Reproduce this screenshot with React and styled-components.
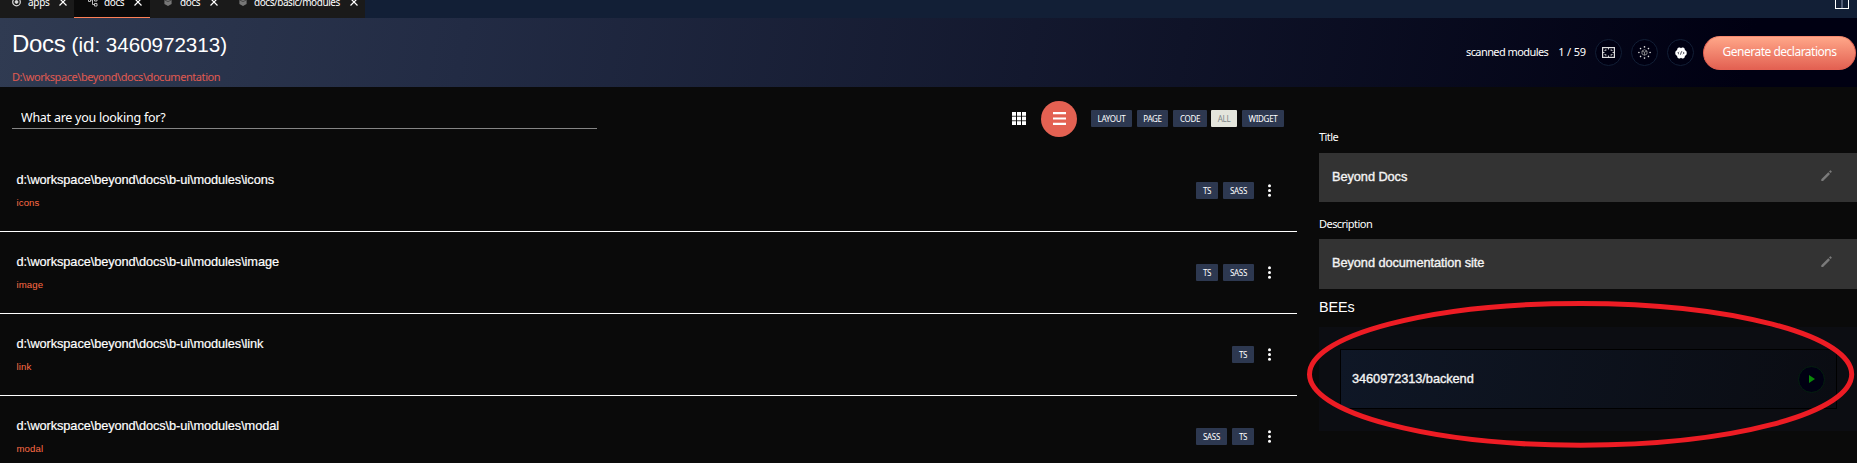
import React from "react";
import styled, { createGlobalStyle } from "styled-components";

const ui = `"Noto Sans", "Open Sans", sans-serif`;
const arial = `"Liberation Sans", Arial, sans-serif`;

const GlobalStyle = createGlobalStyle`
  * { box-sizing: border-box; }
  html, body { margin: 0; height: 100%; overflow: hidden; }
  body { background: #0a0a0a; color: #fff; font-family: ${ui}; }
  button { border: 0; padding: 0; background: none; color: inherit; font: inherit; }
`;

const Page = styled.div`
  position: relative;
  height: 463px;
  overflow: hidden;
  display: flex;
  flex-direction: column;
`;

const TabBar = styled.nav`
  display: flex;
  justify-content: space-between;
  align-items: flex-end;
  height: 18px;
  flex: none;
  overflow: hidden;
  background: #121f36;
`;
const Tabs = styled.div`
  display: flex;
  align-items: flex-end;
`;
const Tab = styled.div`
  display: flex;
  align-items: center;
  width: ${(p) => p.$width}px;
  height: 32px;
  padding: 0 0 0 ${(p) => p.$inset}px;
  background: ${(p) => (p.$active ? "#0a0a0a" : "#1a1a1a")};
  border-bottom: 1px solid ${(p) => (p.$active ? "#ff8056" : "#1a1a1a")};
  svg { flex: none; }
`;
const TabLabel = styled.span`
  width: ${(p) => p.$width}px;
  margin: 0 10px 0 ${(p) => p.$gap}px;
  font-size: 10px;
  line-height: 14px;
  letter-spacing: ${(p) => p.$track}px;
  white-space: nowrap;
`;
const SplitButton = styled.button`
  width: 14px;
  height: 14px;
  margin: 0 8px 9px 0;
  line-height: 0;
`;

const Header = styled.header`
  display: flex;
  justify-content: space-between;
  height: 69px;
  flex: none;
  background: linear-gradient(100deg, #303b52 0%, #222b44 25%, #000012 94%);
`;
const HeaderInfo = styled.div`
  padding: 10px 0 0 12px;
`;
const ProjectTitle = styled.h1`
  margin: 0;
  font: 400 24px/32px ${arial};
  letter-spacing: -0.35px;
  white-space: nowrap;
  small {
    font-size: 20.6px;
    letter-spacing: -0.02px;
  }
`;
const ProjectPath = styled.div`
  margin-top: 8px;
  color: #e05a50;
  font-size: 11px;
  line-height: 16px;
  letter-spacing: -0.43px;
`;
const HeaderActions = styled.div`
  display: flex;
  align-items: center;
  height: 69px;
  padding-right: 1px;
`;
const ScanStatus = styled.div`
  display: flex;
  gap: 10px;
  margin: 0 9px 1px 0;
  font-size: 11px;
  line-height: 16px;
  letter-spacing: -0.58px;
  white-space: nowrap;
  span + span { letter-spacing: -0.15px; }
`;
const RoundButton = styled.button`
  display: flex;
  align-items: center;
  justify-content: center;
  width: 27px;
  height: 27px;
  margin-right: 9px;
  border: 1px solid ${(p) => p.$ring || "#121f36"};
  border-radius: 50%;
  background: #000012;
`;
const PrimaryButton = styled.button`
  width: 153px;
  height: 34px;
  padding-bottom: 1px;
  border: 1px solid #e36152;
  border-top-color: #f5886f;
  border-radius: 17px;
  background: linear-gradient(#ffa789, #e36152);
  color: #fff;
  font-size: 12px;
  line-height: 16px;
  letter-spacing: -0.5px;
  white-space: nowrap;
`;

const Body = styled.div`
  display: flex;
  flex: 1;
  min-height: 0;
`;
const Main = styled.main`
  width: 1297px;
  flex: none;
`;
const Toolbar = styled.div`
  display: flex;
  align-items: center;
  height: 63px;
  padding: 0 13px 0 12px;
`;
const SearchInput = styled.input`
  width: 585px;
  height: 22px;
  margin: 0 auto 2px 0;
  padding: 0 9px;
  border: 0;
  border-bottom: 1px solid #858585;
  background: transparent;
  font: 12.5px/20px ${ui};
  letter-spacing: -0.25px;
  outline: none;
  &::placeholder { color: #fff; opacity: 1; }
`;
const ViewSwitch = styled.div`
  display: flex;
  align-items: center;
  gap: 15px;
  margin-right: 14px;
`;
const ViewButton = styled.button`
  display: flex;
  align-items: center;
  justify-content: center;
  width: ${(p) => (p.$active ? 36 : 14)}px;
  height: 36px;
  border-radius: 50%;
  background: ${(p) => (p.$active ? "#e36152" : "transparent")};
`;
const Tag = styled.span`
  display: inline-flex;
  align-items: center;
  justify-content: center;
  width: ${(p) => p.$width}px;
  height: 17px;
  margin-left: ${(p) => (p.$active ? -1 : 0)}px;
  border-radius: 1px;
  background: ${(p) => (p.$active ? "#e4e5dc" : "#2d3850")};
  color: ${(p) => (p.$active ? "#7e8788" : "#fff")};
  font-size: 8px;
  line-height: 16px;
  letter-spacing: -0.3px;
`;
const Tags = styled.div`
  display: flex;
  gap: 5px;
`;

const Row = styled.article`
  display: flex;
  justify-content: space-between;
  height: 82px;
  padding: 0 24.700px 0 16.500px;
  border-bottom: 1px solid #fff;
`;
const RowText = styled.div`
  padding-top: 20px;
`;
const ModulePath = styled.div`
  font: 12.8px/20px ${arial};
  letter-spacing: -0.1px;
  -webkit-text-stroke: 0.2px currentColor;
`;
const ModuleName = styled.div`
  margin-top: 6px;
  color: #ff6b45;
  font: 9.6px/14px ${arial};
  letter-spacing: 0.1px;
`;
const RowActions = styled.div`
  display: flex;
  align-items: center;
  height: 17px;
  margin-top: 32px;
  gap: 13.300px;
`;
const MoreButton = styled.button`
  width: 5px;
  height: 13px;
  line-height: 0;
`;

const Aside = styled.aside`
  flex: 1;
  padding: 42px 0 0 22px;
`;
const FieldLabel = styled.label`
  display: block;
  font-size: 11px;
  line-height: 16px;
  letter-spacing: -0.55px;
`;
const Field = styled.div`
  display: flex;
  align-items: center;
  justify-content: space-between;
  height: ${(p) => p.$height}px;
  margin: ${(p) => p.$top}px 0 ${(p) => p.$bottom}px;
  padding: 0 25px 2px 13px;
  background: #333;
  color: #f4f4f4;
  font: 12.8px/20px ${arial};
  letter-spacing: -0.08px;
  -webkit-text-stroke: 0.35px currentColor;
  svg { margin-bottom: 3px; }
`;
const SectionTitle = styled.h2`
  margin: 8px 0 10px;
  font: 400 14.4px/20px ${arial};
  letter-spacing: -0.1px;
`;
const BeePanel = styled.section`
  height: 104px;
  padding: 22px 20px 22px 21px;
  background: #0c0d12;
`;
const BeeCard = styled.div`
  display: flex;
  align-items: center;
  justify-content: space-between;
  height: 60px;
  padding: 0 11px 0 11px;
  border: 1px solid #000;
  background: linear-gradient(100deg, #0f1726, #0a0c12);
  font: 12.8px/20px ${arial};
  letter-spacing: -0.08px;
  -webkit-text-stroke: 0.35px currentColor;
  color: #f4f4f4;
  ${RoundButton} { margin: 0; }
`;

const Highlight = styled.svg`
  position: absolute;
  left: 1305px;
  top: 299px;
  pointer-events: none;
`;

const CloseIcon = () => (
  <svg width="8" height="8" viewBox="0 0 8 8" stroke="#fff" strokeWidth="1.2">
    <path d="M.5.5l7 7M7.5.5l-7 7" />
  </svg>
);
const AppsIcon = () => (
  <svg width="9" height="10" viewBox="0 0 9 10" fill="none" stroke="#ddd">
    <circle cx="4.5" cy="5" r="3.8" strokeWidth="1.2" />
    <circle cx="4.5" cy="5" r="1.4" fill="#ddd" />
  </svg>
);
const TreeIcon = () => (
  <svg width="10" height="10" viewBox="0 0 10 10" fill="none" stroke="#bbb">
    <path d="M.5 1.500h2v3h-2zM6.500 1.500H9v2.500H6.500zM6.500 6.500H9v2.500H6.500zM2.500 3h2M4.500 2.500V7.500M4.500 2.500h2M4.500 7.500h2" />
  </svg>
);
const CubeIcon = () => (
  <svg width="8" height="10" viewBox="0 0 8 10">
    <path d="M4 1l3.600 1.800v4.200L4 9 .4 7V2.800z" fill="#777" />
    <path d="M.6 3L4 4.600 7.400 3" fill="none" stroke="#333" strokeWidth=".7" />
  </svg>
);
const SplitIcon = () => (
  <svg width="14" height="14" viewBox="0 0 14 14" fill="none">
    <path d="M7 1v12" stroke="#66718a" strokeWidth="1.500" />
    <rect x=".5" y=".5" width="13" height="13" stroke="#fff" />
  </svg>
);
const FrameIcon = () => (
  <svg width="13" height="11" viewBox="0 0 13 11" fill="none" stroke="#ddd">
    <rect x=".6" y=".6" width="11.800" height="9.800" strokeWidth="1.200" />
    <path d="M3 4V3h1.500M8.500 3H10v1M3 7v1h1.500M8.500 8H10V7M6.500 1v1.500M6.500 8.500V10M1 5.500h1.500M10.500 5.500H12" strokeWidth=".9" />
  </svg>
);
const NodesIcon = () => (
  <svg width="13" height="13" viewBox="0 0 13 13" fill="none">
    <path d="M6.500 3.700L9 5v3L6.500 9.300 4 8V5zM4 5l2.500 1.200L9 5M6.500 6.200v3" stroke="#999" strokeWidth=".8" />
    <g fill="#ddd">
      {[0, 45, 90, 135, 180, 225, 270, 315].map((a) => (
        <circle key={a} cx="6.500" cy=".9" r=".8" transform={`rotate(${a} 6.500 6.500)`} />
      ))}
    </g>
  </svg>
);
const CodeBadgeIcon = () => (
  <svg width="12" height="12" viewBox="0 0 12 12">
    <path
      d="M3.700.5h1.300l1 .8 1-.8h1.300l1.300.9.3 1.600 1.500 1.200.4 1.800-.4 1.800-1.500 1.200-.3 1.500-1.300 1H7l-1-.8-1 .8H3.700l-1.300-1-.3-1.500L.6 7.800.2 6l.4-1.800L2.100 3l.3-1.600z"
      fill="#fff"
    />
    <path d="M4 4.800L2.800 6 4 7.200M8 4.800L9.200 6 8 7.200M6.600 4.300L5.400 7.700" fill="none" stroke="#223" strokeWidth=".8" />
  </svg>
);
const GridIcon = () => (
  <svg width="14" height="13" viewBox="0 0 14 13" fill="#fff">
    {[0, 5, 10].map((x) => [0, 4.6, 9.2].map((y) => <rect key={`${x}-${y}`} x={x} y={y} width="4" height="3.800" />))}
  </svg>
);
const ListIcon = () => (
  <svg width="13" height="13" viewBox="0 0 13 13" fill="#fff">
    <path d="M0 0h13v2.200H0zM0 5.400h13v2.200H0zM0 10.800h13V13H0z" />
  </svg>
);
const MoreIcon = () => (
  <svg width="5" height="13" viewBox="0 0 5 13" fill="#fff">
    <circle cx="2.500" cy="1.700" r="1.500" />
    <circle cx="2.500" cy="6.500" r="1.500" />
    <circle cx="2.500" cy="11.300" r="1.500" />
  </svg>
);
const PencilIcon = () => (
  <svg width="11" height="11" viewBox="0 0 11 11" fill="#7b7b7b">
    <path d="M.3 11V9.200l7-7 1.700 1.700L2 11zM8 1.500L9 .4q.4-.4.800 0l.8.8q.4.4 0 .8L9.600 3.100z" />
  </svg>
);
const PlayIcon = () => (
  <svg width="6" height="8" viewBox="0 0 6 8">
    <path d="M0 0l6 4-6 4z" fill="#0a870a" />
  </svg>
);

const tabs = [
  { label: "apps", icon: AppsIcon, width: 74, inset: 12, gap: 7, text: 21, track: -0.3 },
  { label: "docs", icon: TreeIcon, width: 76, inset: 14, gap: 6, text: 20, track: -0.4, active: true },
  { label: "docs", icon: CubeIcon, width: 75, inset: 14, gap: 8, text: 20, track: -0.4 },
  { label: "docs/basic/modules", icon: CubeIcon, width: 140, inset: 14, gap: 7, text: 86, track: -0.45 },
];
const filters = [
  { label: "LAYOUT", width: 41 },
  { label: "PAGE", width: 31 },
  { label: "CODE", width: 34 },
  { label: "ALL", width: 26, active: true },
  { label: "WIDGET", width: 42 },
];
const modules = [
  { name: "icons", tags: ["TS", "SASS"] },
  { name: "image", tags: ["TS", "SASS"] },
  { name: "link", tags: ["TS"] },
  { name: "modal", tags: ["SASS", "TS"] },
];
const tagWidths = { TS: 22, SASS: 31 };

export default function App() {
  return (
    <Page>
      <GlobalStyle />
      <TabBar>
        <Tabs>
          {tabs.map(({ label, icon: Icon, width, inset, gap, text, track, active }, i) => (
            <Tab key={i} $width={width} $inset={inset} $active={active}>
              <Icon />
              <TabLabel $width={text} $gap={gap} $track={track}>{label}</TabLabel>
              <CloseIcon />
            </Tab>
          ))}
        </Tabs>
        <SplitButton><SplitIcon /></SplitButton>
      </TabBar>
      <Header>
        <HeaderInfo>
          <ProjectTitle>Docs <small>(id: 3460972313)</small></ProjectTitle>
          <ProjectPath>D:\workspace\beyond\docs\documentation</ProjectPath>
        </HeaderInfo>
        <HeaderActions>
          <ScanStatus><span>scanned modules</span><span>1 / 59</span></ScanStatus>
          <RoundButton><FrameIcon /></RoundButton>
          <RoundButton><NodesIcon /></RoundButton>
          <RoundButton><CodeBadgeIcon /></RoundButton>
          <PrimaryButton>Generate declarations</PrimaryButton>
        </HeaderActions>
      </Header>
      <Body>
        <Main>
          <Toolbar>
            <SearchInput placeholder="What are you looking for?" />
            <ViewSwitch>
              <ViewButton><GridIcon /></ViewButton>
              <ViewButton $active><ListIcon /></ViewButton>
            </ViewSwitch>
            <Tags>
              {filters.map((f) => (
                <Tag key={f.label} $width={f.width} $active={f.active}>{f.label}</Tag>
              ))}
            </Tags>
          </Toolbar>
          {modules.map((m) => (
            <Row key={m.name}>
              <RowText>
                <ModulePath>{`d:\\workspace\\beyond\\docs\\b-ui\\modules\\${m.name}`}</ModulePath>
                <ModuleName>{m.name}</ModuleName>
              </RowText>
              <RowActions>
                <Tags>{m.tags.map((t) => <Tag key={t} $width={tagWidths[t]}>{t}</Tag>)}</Tags>
                <MoreButton><MoreIcon /></MoreButton>
              </RowActions>
            </Row>
          ))}
        </Main>
        <Aside>
          <FieldLabel>Title</FieldLabel>
          <Field $height={49} $top={8} $bottom={14}>Beyond Docs<PencilIcon /></Field>
          <FieldLabel>Description</FieldLabel>
          <Field $height={50} $top={7} $bottom={0}>Beyond documentation site<PencilIcon /></Field>
          <SectionTitle>BEEs</SectionTitle>
          <BeePanel>
            <BeeCard>
              3460972313/backend
              <RoundButton $ring="#04200f"><PlayIcon /></RoundButton>
            </BeeCard>
          </BeePanel>
        </Aside>
      </Body>
      <Highlight width="551" height="151" viewBox="0 0 551 151" fill="none">
        <ellipse cx="275.600" cy="75.300" rx="271.100" ry="70.900" stroke="#ed1c24" strokeWidth="5" />
      </Highlight>
    </Page>
  );
}
